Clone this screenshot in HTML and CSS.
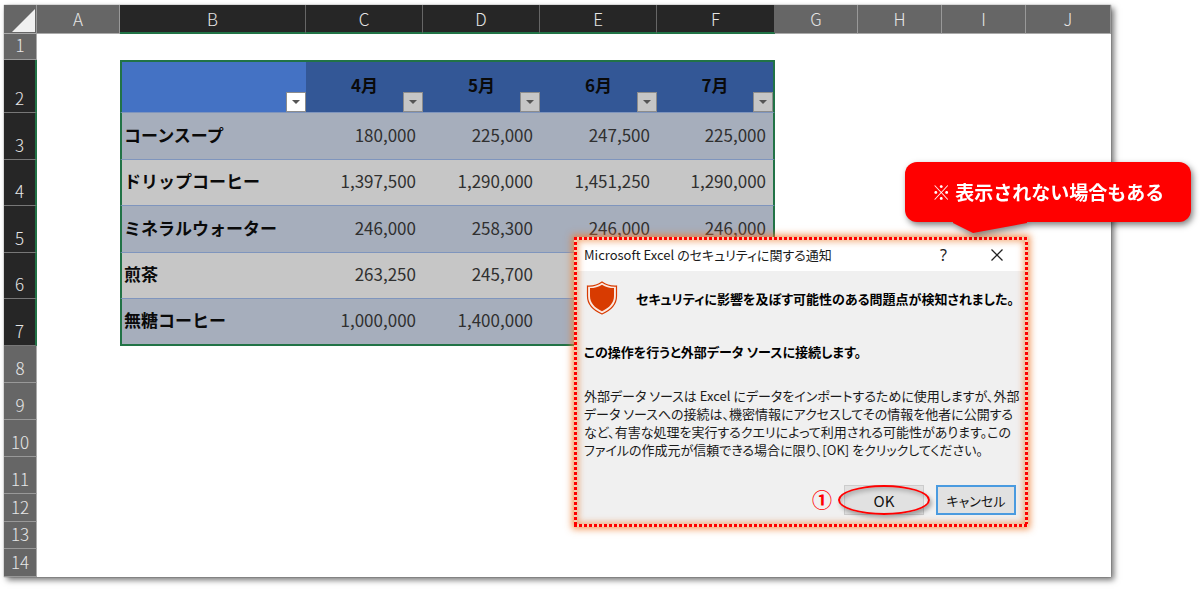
FILE: index.html
```html
<!DOCTYPE html>
<html lang="ja">
<head>
<meta charset="utf-8">
<title>Microsoft Excel のセキュリティに関する通知</title>
<link rel="stylesheet" href="styles.css">
</head>
<body>
<main class="stage">
  <table class="sheet">
    <colgroup>
      <col class="col-head"><col class="col-edge"><col class="col-name">
      <col class="col-month"><col class="col-month"><col class="col-month"><col class="col-month-last">
      <col class="col-edge"><col class="col-narrow"><col class="col-narrow"><col>
    </colgroup>
    <thead>
      <tr class="letters">
        <th class="corner"><svg width="24" height="24" viewBox="0 0 24 24" aria-hidden="true"><path d="M23 0V23H0Z" fill="#f0f0f0"/></svg></th>
        <th scope="col">A</th>
        <th scope="col" class="on">B</th><th scope="col" class="on">C</th><th scope="col" class="on">D</th><th scope="col" class="on">E</th><th scope="col" class="on">F</th>
        <th scope="col">G</th><th scope="col">H</th><th scope="col">I</th><th scope="col">J</th>
      </tr>
    </thead>
    <tbody>
      <tr class="row-first"><th scope="row" class="num">1</th><td colspan="10"></td></tr>
      <tr class="row-title sel">
        <th scope="row" class="num">2</th><td></td>
        <th class="cell active"><button class="filter" aria-label="品名フィルター"></button></th>
        <th class="cell month">4月<button class="filter" aria-label="4月フィルター"></button></th>
        <th class="cell month">5月<button class="filter" aria-label="5月フィルター"></button></th>
        <th class="cell month">6月<button class="filter" aria-label="6月フィルター"></button></th>
        <th class="cell month last">7月<button class="filter" aria-label="7月フィルター"></button></th>
        <td colspan="4"></td>
      </tr>
      <tr class="row-data sel band"><th scope="row" class="num">3</th><td></td><th class="cell name">コーンスープ</th><td class="cell">180,000</td><td class="cell">225,000</td><td class="cell">247,500</td><td class="cell last">225,000</td><td colspan="4"></td></tr>
      <tr class="row-data-b sel"><th scope="row" class="num">4</th><td></td><th class="cell name">ドリップコーヒー</th><td class="cell">1,397,500</td><td class="cell">1,290,000</td><td class="cell">1,451,250</td><td class="cell last">1,290,000</td><td colspan="4"></td></tr>
      <tr class="row-data sel band"><th scope="row" class="num">5</th><td></td><th class="cell name">ミネラルウォーター</th><td class="cell">246,000</td><td class="cell">258,300</td><td class="cell">246,000</td><td class="cell last">246,000</td><td colspan="4"></td></tr>
      <tr class="row-data-b sel"><th scope="row" class="num">6</th><td></td><th class="cell name">煎茶</th><td class="cell">263,250</td><td class="cell">245,700</td><td class="cell"></td><td class="cell last"></td><td colspan="4"></td></tr>
      <tr class="row-data sel band end"><th scope="row" class="num">7</th><td></td><th class="cell name">無糖コーヒー</th><td class="cell">1,000,000</td><td class="cell">1,400,000</td><td class="cell"></td><td class="cell last"></td><td colspan="4"></td></tr>
      <tr class="row-mid"><th scope="row" class="num">8</th><td colspan="10"></td></tr>
      <tr class="row-mid"><th scope="row" class="num">9</th><td colspan="10"></td></tr>
      <tr class="row-mid"><th scope="row" class="num">10</th><td colspan="10"></td></tr>
      <tr class="row-mid"><th scope="row" class="num">11</th><td colspan="10"></td></tr>
      <tr class="row-foot"><th scope="row" class="num">12</th><td colspan="10"></td></tr>
      <tr class="row-short"><th scope="row" class="num">13</th><td colspan="10"></td></tr>
      <tr class="row-foot"><th scope="row" class="num">14</th><td colspan="10"></td></tr>
    </tbody>
  </table>

  <section class="dialog" role="dialog" aria-labelledby="dialog-title">
    <header class="titlebar">
      <h1 class="title" id="dialog-title">Microsoft Excel のセキュリティに関する通知</h1>
      <button class="tool">?</button>
      <button class="tool" aria-label="閉じる"><svg width="12" height="12" viewBox="0 0 12 12" aria-hidden="true"><path d="M.5 .5 11.5 11.5M11.5 .5 .5 11.5" stroke="#222" stroke-width="1.3"/></svg></button>
    </header>
    <div class="content">
      <div class="warning">
        <svg class="shield" width="32" height="34" viewBox="0 0 32 34" aria-hidden="true">
          <path d="M16 1C12 4 7 5.300 1.500 5V15C1.500 23 7 29 16 33 25 29 30.500 23 30.500 15V5C25 5.300 20 4 16 1Z" fill="#fbe9e2" stroke="#d83b01" stroke-width="1.200"/>
          <path d="M16 3.700C12.500 6 8.500 7 4 7.100V15C4 21.800 8.500 26.700 16 30.200 23.500 26.700 28 21.800 28 15V7.100C23.500 7 19.500 6 16 3.700Z" fill="#d83b01"/>
        </svg>
        <strong>セキュリティに影響を及ぼす可能性のある問題点が検知されました。</strong>
      </div>
      <p class="lead">この操作を行うと外部データ ソースに接続します。</p>
      <p class="detail">外部データ ソースは Excel にデータをインポートするために使用しますが、外部<br>データ ソースへの接続は、機密情報にアクセスしてその情報を他者に公開する<br>など、有害な処理を実行するクエリによって利用される可能性があります。この<br>ファイルの作成元が信頼できる場合に限り、[OK] をクリックしてください。</p>
      <div class="actions">
        <span class="step">①</span>
        <button class="btn ok">OK<span class="ring"></span></button>
        <button class="btn cancel">キャンセル</button>
      </div>
    </div>
  </section>

  <aside class="callout">※ 表示されない場合もある
    <svg class="tail" width="74" height="12" viewBox="0 0 74 12" aria-hidden="true"><path d="M0 0H74V1L20 11 0 1Z" fill="#f00"/></svg>
  </aside>
</main>
</body>
</html>
```

FILE: styles.css
```css
* { box-sizing: border-box; }

body {
  margin: 0;
  background: #fff;
  font-family: "Noto Sans CJK JP", sans-serif;
}

.stage {
  position: relative;
  padding: 5px 89px 12px 4px;
}

/* Spreadsheet */
.sheet {
  width: 100%;
  table-layout: fixed;
  border-collapse: separate;
  border-spacing: 0;
  background: #fff;
  box-shadow: 3px 3px 6px rgba(0, 0, 0, .55), 0 0 1px #777;
  font-size: 17px;
  line-height: 20px;
}

.sheet th, .sheet td { padding: 0; }

.col-head { width: 33px; }
.col-edge { width: 83px; }
.col-narrow { width: 84px; }
.col-name { width: 186px; }
.col-month { width: 117px; }
.col-month-last { width: 118px; }

.letters { height: 29px; }
.letters th, .num {
  background: #666;
  color: #e6e6e6;
  font-weight: 300;
}
.letters th {
  border-right: 1px solid #999;
  border-bottom: 1px solid #aaa;
}
.letters .on {
  background: #262626;
  border-right-color: #666;
  border-bottom: 2px solid #217346;
}
.letters .corner { text-align: right; vertical-align: bottom; }
.corner svg { display: block; margin-left: auto; }

.num {
  border-right: 1px solid #aaa;
  border-bottom: 1px solid #999;
  vertical-align: bottom;
}
.sheet .num { padding-bottom: 4px; }
.sel .num {
  background: #262626;
  border-right: 2px solid #217346;
  border-bottom-color: #777;
}

.row-first { height: 26px; }
.row-short { height: 27px; }
.row-foot { height: 28px; }
.row-title { height: 53px; }
.row-data { height: 47px; }
.row-data-b { height: 46px; }
.row-mid { height: 37px; }

.cell {
  position: relative;
  background: #c6c6c6;
  border-bottom: 1px solid #7f95bd;
  color: #303030;
  text-align: right;
}
.sheet td.cell { padding: 0 7px 3px 0; }
.band .cell { background: #a6aebc; }
.row-title .cell {
  border-top: 2px solid #217346;
  background: #335796;
  color: #0a0a0a;
  text-align: center;
}
.sheet .month { padding-bottom: 4px; }
.row-title .active { background: #4472c4; }
.sheet .name {
  padding: 0 0 3px 2px;
  color: #0a0a0a;
  text-align: left;
}
.sheet .name, .row-title .active { border-left: 2px solid #217346; }
.sheet .last { border-right: 2px solid #217346; }
.end .cell { border-bottom: 2px solid #217346; }

.filter {
  position: absolute;
  right: 0;
  bottom: 0;
  display: grid;
  place-items: center;
  width: 20px;
  height: 20px;
  padding: 0;
  border: 1px solid #8c8c8c;
  background: #c6c6c6;
}
.filter::after {
  content: "";
  border: 4px solid transparent;
  border-top-color: #555;
  border-bottom: 0;
}
.active .filter { background: #fff; }

/* Security notice */
.dialog {
  --dots: #f00 0 3px, #f8cfae 3px 5px;
  position: absolute;
  top: 237px;
  left: 574px;
  width: 454px;
  padding: 3px;
  background:
    repeating-linear-gradient(90deg, var(--dots)) top / 100% 3px no-repeat,
    repeating-linear-gradient(90deg, var(--dots)) bottom / 100% 3px no-repeat,
    repeating-linear-gradient(var(--dots)) left / 3px 100% no-repeat,
    repeating-linear-gradient(var(--dots)) right / 3px 100% no-repeat,
    #f0f0f0;
  box-shadow: 0 0 7px 2px rgba(237, 125, 49, .8);
  color: #1a1a1a;
  font-family: "Noto Sans CJK JP", sans-serif;
  font-size: 13px;
  font-feature-settings: "palt";
}
.dialog::after {
  content: "";
  position: absolute;
  inset: 3px;
  box-shadow: inset 0 0 7px 1px rgba(237, 125, 49, .7);
  pointer-events: none;
}

.titlebar {
  display: flex;
  align-items: center;
  height: 31px;
  padding: 0 2px 2px 7px;
  background: #fff;
}
.title {
  flex: 1;
  margin: 0;
  font-size: 13px;
  font-weight: 400;
}
.tool {
  display: grid;
  place-items: center;
  width: 53px;
  padding: 0;
  border: 0;
  background: none;
  color: #222;
  font: 16px "Noto Sans", sans-serif;
}

.content { padding: 10px 9px 9px 7px; }
.warning {
  display: flex;
  align-items: center;
  gap: 18px;
  padding-left: 2px;
  color: #000;
  white-space: nowrap;
}
.shield { flex: none; }
.lead {
  margin: 28px 0 26px;
  color: #000;
  font-weight: 700;
  line-height: 18px;
}
.detail {
  margin: 0;
  line-height: 18px;
  white-space: nowrap;
}
.actions {
  display: flex;
  justify-content: flex-end;
  align-items: center;
  gap: 12px;
  margin-top: 26px;
}
.step {
  color: #f00;
  font-size: 20px;
  font-weight: 700;
  line-height: 30px;
}
.btn {
  position: relative;
  width: 80px;
  height: 30px;
  padding: 0;
  border: 1px solid #ccc;
  background: #e1e1e1;
  color: #111;
  font: inherit;
}
.ok { font-size: 15px; }
.cancel { border: 2px solid #4a9be0; }
.ring {
  position: absolute;
  inset: -1px -7px;
  border: 2px solid #f00;
  border-radius: 50%;
  box-shadow: 2px 3px 4px rgba(0, 0, 0, .3), inset 2px 3px 4px rgba(0, 0, 0, .2);
}

/* Callout */
.callout {
  position: absolute;
  top: 162px;
  right: 9px;
  width: 286px;
  padding: 18px 0;
  border-radius: 12px;
  background: #f00;
  color: #fff;
  font-size: 19px;
  font-weight: 700;
  line-height: 24px;
  text-align: center;
  filter: drop-shadow(2px 3px 3px rgba(0, 0, 0, .5));
}
.tail {
  position: absolute;
  top: 100%;
  left: 48px;
}
```
